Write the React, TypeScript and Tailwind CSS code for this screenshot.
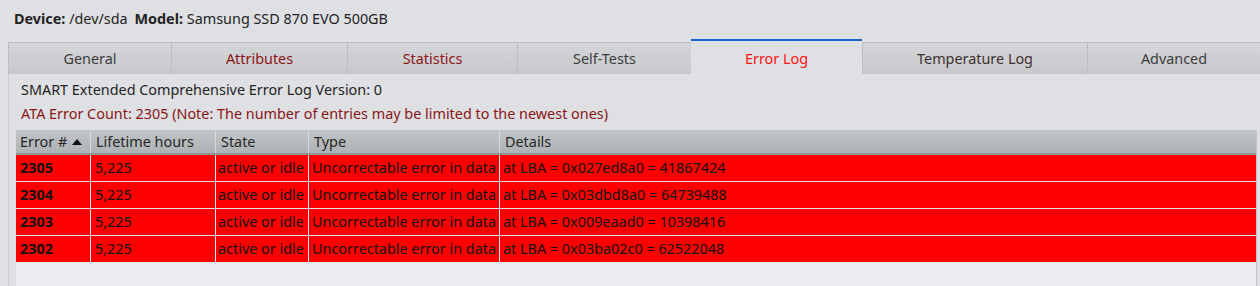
import React from "react"

const tabs = [
  { label: "General", w: "w-[163px]", color: "text-[#3c3c3c]" },
  { label: "Attributes", w: "w-[176px]", color: "text-[#8a1616]" },
  { label: "Statistics", w: "w-[170px]", color: "text-[#8a1616]" },
  { label: "Self-Tests", w: "w-[174px]", color: "text-[#3c3c3c]" },
  { label: "Error Log", w: "w-[171px]", color: "text-[#ff1414]", active: true },
  { label: "Temperature Log", w: "w-[225px]", color: "text-[#3e3030]" },
  { label: "Advanced", w: "flex-1", color: "text-[#3c3c3c]" },
]

const rows = [
  { n: "2305", lba: "0x027ed8a0 = 41867424" },
  { n: "2304", lba: "0x03dbd8a0 = 64739488" },
  { n: "2303", lba: "0x009eaad0 = 10398416" },
  { n: "2302", lba: "0x03ba02c0 = 62522048" },
]

export default function App() {
  return (
    <div
      className="w-[1260px] h-[286px] overflow-hidden bg-[#dfe0e4] text-[14.4px] text-[#232323]"
      style={{ fontFamily: '"Noto Sans", "Open Sans", sans-serif' }}
    >
      {/* Device header */}
      <div className="h-[39px] pl-[14px] pt-[9px] leading-[20px]">
        <span className="font-bold">Device:</span> /dev/sda{" "}
        <span className="ml-[3px] font-bold">Model:</span> Samsung SSD 870 EVO 500GB
      </div>

      {/* Tabs */}
      <div className="flex h-[35px] pl-[8px]">
        {tabs.map((t) =>
          t.active ? (
            <div
              key={t.label}
              className={`${t.w} flex items-center justify-center border-t-[2px] border-[#1d5fd6] bg-[#dfe0e4] ${t.color}`}
            >
              <span className="pt-[2px]">{t.label}</span>
            </div>
          ) : (
            <div key={t.label} className={`${t.w} flex flex-col`}>
              <div className="h-[3px]" />
              <div
                className={`flex flex-1 items-center justify-center border-t border-l border-[#bdbec2] bg-gradient-to-b from-[#d5d6d9] to-[#c7c8cb] ${t.color}`}
              >
                {t.label}
              </div>
            </div>
          )
        )}
      </div>

      {/* Panel */}
      <div className="ml-[8px] h-[212px] border-l border-[#c9cacd] pl-[12px]">
        <div className="pt-[4px] leading-[24px]">SMART Extended Comprehensive Error Log Version: 0</div>
        <div className="leading-[24px] text-[#8a1616]">
          ATA Error Count: 2305 (Note: The number of entries may be limited to the newest ones)
        </div>

        <div className="mt-[4px] ml-[-5px] mr-[3px] h-[200px] border-t border-r border-[#c3c4c8] bg-[#ebecf0]">
          {/* header */}
          <div className="flex h-[24px] border-b-[2px] border-[#8f9396] bg-gradient-to-b from-[#c0c4c6] to-[#adb2b5] leading-[22px] text-[#262626]">
            <div className="flex w-[74px] items-center pl-[4px]">
              Error #
              <svg width="10" height="6" viewBox="0 0 10 6" className="ml-[5px]">
                <path d="M0 6 L5 0 L10 6 Z" fill="#111" />
              </svg>
            </div>
            <div className="w-[125px] border-l border-[#d6d8da] pl-[5px]">Lifetime hours</div>
            <div className="w-[93px] border-l border-[#d6d8da] pl-[5px]">State</div>
            <div className="w-[191px] border-l border-[#d6d8da] pl-[5px]">Type</div>
            <div className="flex-1 border-l border-[#d6d8da] pl-[5px]">Details</div>
          </div>

          {rows.map((r) => (
            <div key={r.n} className="flex h-[27px] border-b border-[#e4e4e6] bg-[#ff0000] leading-[26px] text-[#111]">
              <div className="w-[74px] pl-[4px] font-bold">{r.n}</div>
              <div className="w-[125px] border-l border-[#ececec] pl-[4px]">5,225</div>
              <div className="w-[93px] border-l border-[#ececec] pl-[2px] whitespace-nowrap">active or idle</div>
              <div className="w-[191px] border-l border-[#ececec] pl-[3px] whitespace-nowrap">Uncorrectable error in data</div>
              <div className="flex-1 border-l border-[#ececec] pl-[3px]">at LBA = {r.lba}</div>
            </div>
          ))}
        </div>
      </div>
    </div>
  )
}
